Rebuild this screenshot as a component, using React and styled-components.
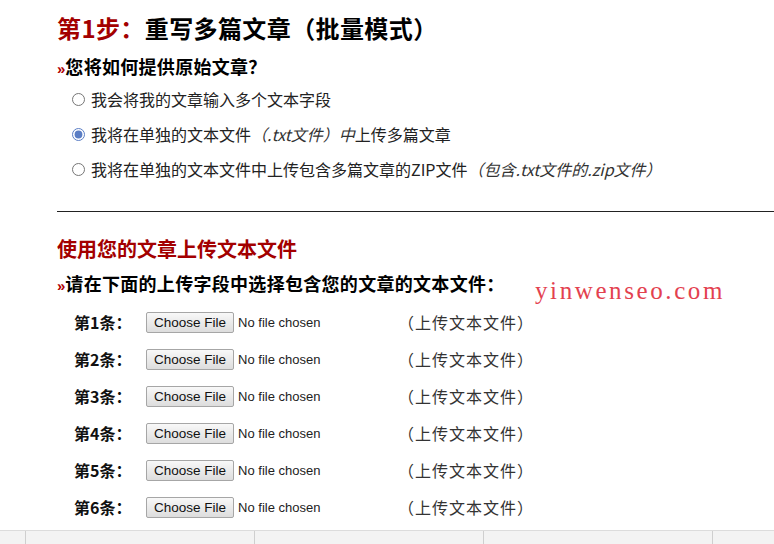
import React from 'react';
import styled, { createGlobalStyle } from 'styled-components';

const GlobalStyle = createGlobalStyle`
  html, body {
    margin: 0;
    padding: 0;
    background: #fff;
  }
  body {
    font-family: "Noto Sans CJK SC", "Liberation Sans", sans-serif;
    color: #222;
    overflow: hidden;
  }
`;

const Page = styled.div`
  position: relative;
  width: 774px;
  height: 544px;
  display: flex;
  flex-direction: column;
  overflow: hidden;
`;

const Content = styled.div`
  flex: 1;
  padding: 12px 0 0 57px;
`;

const StepTitle = styled.h1`
  margin: 0;
  font-size: 24px;
  line-height: 32px;
  font-weight: 700;
  color: #000;
  letter-spacing: 0.4px;
`;

const Red = styled.span`
  color: #a30000;
`;

const Question = styled.h3`
  margin: ${p => p.$top || 4}px 0 0;
  font-size: 18px;
  line-height: 24px;
  font-weight: 700;
  color: #000;
  letter-spacing: 0.3px;
`;

const Arrow = styled.span`
  color: #b00000;
  font-family: "Liberation Sans", sans-serif;
  font-size: 15px;
  letter-spacing: 0;
`;

const RadioList = styled.div`
  display: flex;
  flex-direction: column;
  gap: 13px;
  margin-top: 7px;
  padding-left: 15px;
`;

const RadioRow = styled.label`
  display: flex;
  align-items: center;
  gap: 6px;
  font-size: 16px;
  line-height: 22px;
  color: #222;
`;

const Radio = styled.input`
  margin: 0;
  width: 13px;
  height: 13px;
  accent-color: #5a7dc4;
`;

const Hint = styled.em`
  font-style: italic;
  color: #333;
`;

const Rule = styled.hr`
  margin: 31px 0 0;
  border: 0;
  border-top: 1px solid #222;
`;

const SectionTitle = styled.h2`
  margin: 23px 0 0;
  font-size: 20px;
  line-height: 28px;
  font-weight: 700;
  color: #a30000;
`;

const Uploads = styled.div`
  display: flex;
  flex-direction: column;
  gap: 16px;
  margin-top: 14px;
  padding-left: 17px;
`;

const UploadRow = styled.div`
  display: grid;
  grid-template-columns: 72px 252px auto;
  align-items: center;
  height: 21px;
`;

const ItemLabel = styled.span`
  font-size: 16px;
  font-weight: 700;
  color: #111;
  line-height: 21px;
`;

const FileInput = styled.input`
  font-family: "Liberation Sans", Arial, sans-serif;
  font-size: 13px;
  color: #222;
  width: 252px;
  height: 21px;

  &::file-selector-button {
    font-family: "Liberation Sans", Arial, sans-serif;
    font-size: 13.5px;
    color: #111;
    height: 21px;
    padding: 0 7px;
    margin-right: 4px;
    border: 1px solid #a6a6a6;
    border-radius: 2px;
    background: linear-gradient(#f8f8f8, #dddddd);
  }
`;

const Note = styled.span`
  font-size: 16px;
  line-height: 21px;
  color: #333;
  letter-spacing: 1px;
`;

const Watermark = styled.div`
  position: absolute;
  left: 535px;
  top: 275px;
  font-family: "Liberation Serif", "DejaVu Serif", serif;
  font-size: 25px;
  line-height: 32px;
  color: #e3414f;
  letter-spacing: 2.6px;
`;

const Footer = styled.div`
  height: 13px;
  border-top: 1px solid #dcdcdc;
  background: #f3f3f3;
  display: grid;
  grid-template-columns: 25px repeat(3, 229px) 1fr;
`;

const FooterCell = styled.div`
  border-left: ${p => (p.$first ? 'none' : '1px solid #cfcfcf')};
`;

const options = [
  { id: 'fields', text: '我会将我的文章输入多个文本字段' },
  { id: 'txt', text: '我将在单独的文本文件', hint: '（.txt文件）中', tail: '上传多篇文章', checked: true },
  { id: 'zip', text: '我将在单独的文本文件中上传包含多篇文章的ZIP文件', hint: '（包含.txt文件的.zip文件）' },
];

const items = [1, 2, 3, 4, 5, 6];

export default function App() {
  return (
    <Page>
      <GlobalStyle />
      <Content>
        <StepTitle>
          <Red>第1步：</Red>重写多篇文章（批量模式）
        </StepTitle>
        <Question $top={10}>
          <Arrow>»</Arrow>您将如何提供原始文章？
        </Question>
        <RadioList>
          {options.map(opt => (
            <RadioRow key={opt.id}>
              <Radio type="radio" name="source" defaultChecked={opt.checked} />
              <span>
                {opt.text}
                {opt.hint && <Hint>{opt.hint}</Hint>}
                {opt.tail}
              </span>
            </RadioRow>
          ))}
        </RadioList>
        <Rule />
        <SectionTitle>使用您的文章上传文本文件</SectionTitle>
        <Question $top={8}>
          <Arrow>»</Arrow>请在下面的上传字段中选择包含您的文章的文本文件：
        </Question>
        <Uploads>
          {items.map(n => (
            <UploadRow key={n}>
              <ItemLabel>第{n}条：</ItemLabel>
              <FileInput type="file" accept=".txt" />
              <Note>（上传文本文件）</Note>
            </UploadRow>
          ))}
        </Uploads>
      </Content>
      <Watermark>yinwenseo.com</Watermark>
      <Footer>
        <FooterCell $first />
        <FooterCell />
        <FooterCell />
        <FooterCell />
        <FooterCell />
      </Footer>
    </Page>
  );
}
